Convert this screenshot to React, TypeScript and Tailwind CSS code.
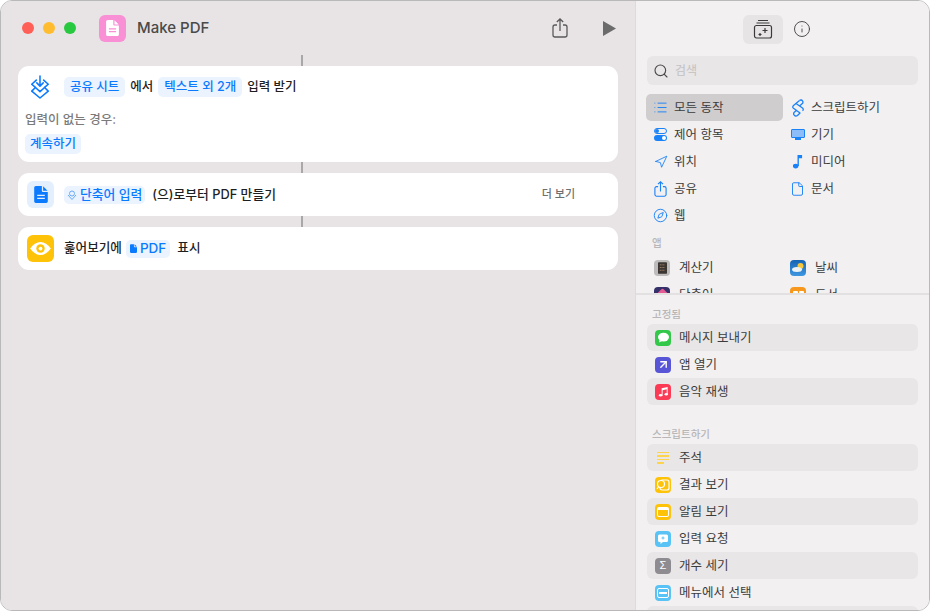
import { useState } from "react";
import { Search, Info, List, Navigation, File, Compass, ArrowUpRight } from "lucide-react";

const font = "font-['Inter','Noto_Sans_CJK_KR',sans-serif]";

function Token({ children, className = "" }: { children: React.ReactNode; className?: string }) {
    return <span className={`inline-flex items-center h-[20px] px-[6px] rounded-[5px] bg-[#eaf3fe] text-[#0a7aff] font-medium ${className}`}>{children}</span>;
}

function Connector() {
    return <div className="w-[2px] h-[11px] bg-[#a9a7a8] ml-[300px]" />;
}

function SmallDoc({ className = "", lines = "" }: { className?: string; lines?: string }) {
    return (
        <svg viewBox="0 0 16 20" className={className} fill="currentColor">
            <path d="M2 0h7v5.500c0 .8.700 1.500 1.500 1.500H16v11c0 1.100-.9 2-2 2H2c-1.100 0-2-.9-2-2V2C0 .9.900 0 2 0zM10.500 0.300L15.700 5.500h-5.200z" />
            {lines && <path d="M3.500 11h9M3.500 14.500h9" stroke={lines} strokeWidth="1.500" />}
        </svg>
    );
}

function ShareGlyph({ className = "", strokeWidth = 1.300 }: { className?: string; strokeWidth?: number }) {
    return (
        <svg viewBox="0 0 16 20" className={className} fill="none" stroke="currentColor" strokeWidth={strokeWidth}>
            <path d="M5 7H3a2 2 0 0 0-2 2v8a2 2 0 0 0 2 2h10a2 2 0 0 0 2-2V9a2 2 0 0 0-2-2h-2" />
            <path d="M8 13V1M4.800 4L8 1l3.200 3" />
        </svg>
    );
}

function Category({ icon, label, active = false }: { icon: React.ReactNode; label: string; active?: boolean }) {
    return (
        <div className={`h-[27px] flex items-center pl-[7px] rounded-[5px] ${active ? "bg-[#d0cdce]" : ""}`}>
            <span className="w-[15px] h-[18px] flex items-center justify-center text-[#1a82f7]">{icon}</span>
            <span className="ml-[6px] pt-[2px] text-[12.500px] text-[#3c3c3c]">{label}</span>
        </div>
    );
}

function Tile({ bg, children }: { bg: string; children: React.ReactNode }) {
    return <span className={`w-[16px] h-[16px] rounded-[4px] flex items-center justify-center shrink-0 overflow-hidden ${bg}`}>{children}</span>;
}

function ActionRow({ icon, label, striped }: { icon: React.ReactNode; label: string; striped: boolean }) {
    return (
        <div className={`h-[27px] shrink-0 flex items-center pl-[8px] rounded-[6px] ${striped ? "bg-[#e9e6e7]" : ""}`}>
            {icon}
            <span className="ml-[8px] pt-[1px] text-[12.500px] text-[#3c3c3c]">{label}</span>
        </div>
    );
}

function AppCell({ icon, label, indent = "pl-[8px]" }: { icon: React.ReactNode; label: string; indent?: string }) {
    return (
        <div className={`h-[27px] flex items-center ${indent}`}>
            {icon}
            <span className="ml-[9px] pt-[1px] text-[12.500px] text-[#3c3c3c]">{label}</span>
        </div>
    );
}

const pinned = [
    {
        label: "메시지 보내기",
        icon: (
            <Tile bg="bg-[#34c84a]">
                <svg viewBox="0 0 14 12" className="w-[13px] h-[11px]" fill="white">
                    <ellipse cx="7" cy="5.500" rx="6" ry="4.800" />
                    <path d="M3 8.500L2 11.500l4-2z" />
                </svg>
            </Tile>
        ),
    },
    { label: "앱 열기", icon: <Tile bg="bg-[#5856d6]"><ArrowUpRight size={13} stroke="white" strokeWidth={2.500} /></Tile> },
    {
        label: "음악 재생",
        icon: (
            <Tile bg="bg-[#fb3a55]">
                <svg viewBox="0 0 12 12" className="w-[11px] h-[11px]" fill="white">
                    <path d="M4 2.500L10.500 1v8h-1V3.500L5 4.500V10.500H4z" />
                    <ellipse cx="2.800" cy="10" rx="1.800" ry="1.400" />
                    <ellipse cx="9" cy="9" rx="1.800" ry="1.400" />
                </svg>
            </Tile>
        ),
    },
];

const scripting = [
    {
        label: "주석",
        icon: (
            <span className="w-[16px] flex flex-col gap-[2px] items-start pl-[2px]">
                <i className="block w-[12px] h-[1.500px] bg-[#fdd54a]" />
                <i className="block w-[12px] h-[1.500px] bg-[#fdd54a]" />
                <i className="block w-[12px] h-[1.500px] bg-[#fdd54a]" />
                <i className="block w-[7px] h-[1.500px] bg-[#fdd54a]" />
            </span>
        ),
    },
    {
        label: "결과 보기",
        icon: (
            <Tile bg="bg-[#fec309]">
                <svg viewBox="0 0 14 12" className="w-[14px] h-[12px]" fill="none" stroke="white" strokeWidth="1.200">
                    <rect x="4" y="1" width="9" height="10" rx="2" />
                    <circle cx="5" cy="5" r="3.500" fill="#fec309" />
                    <path d="M2.500 8L1 10" />
                </svg>
            </Tile>
        ),
    },
    { label: "알림 보기", icon: <Tile bg="bg-[#fec309]"><span className="block w-[12px] h-[10px] rounded-[2px] border-[1.500px] border-white border-t-[3px]" /></Tile> },
    {
        label: "입력 요청",
        icon: (
            <Tile bg="bg-[#5ac3f5]">
                <svg viewBox="0 0 12 12" className="w-[12px] h-[12px]">
                    <path d="M2.500 1.500h7a1.500 1.500 0 0 1 1.500 1.500v4.500a1.500 1.500 0 0 1-1.500 1.500H6L3.500 11V9h-1A1.500 1.500 0 0 1 1 7.500V3a1.500 1.500 0 0 1 1.500-1.500z" fill="white" />
                    <path d="M6 3.500v3M4.500 5h3" stroke="#5ac3f5" strokeWidth="1" />
                </svg>
            </Tile>
        ),
    },
    { label: "개수 세기", icon: <Tile bg="bg-[#8e8c91]"><span className="text-white text-[11px] leading-none font-['Liberation_Sans',sans-serif]">Σ</span></Tile> },
    {
        label: "메뉴에서 선택",
        icon: (
            <Tile bg="bg-[#5ac3f5]">
                <svg viewBox="0 0 12 10" className="w-[12px] h-[10px]">
                    <rect x="0.500" y="0.500" width="11" height="9" rx="1.500" fill="none" stroke="white" />
                    <rect x="2" y="4" width="8" height="2" fill="white" />
                </svg>
            </Tile>
        ),
    },
    { label: "", icon: <span className="w-[16px] h-[16px]" /> },
];

export default function App() {
    const [title] = useState("Make PDF");
    return (
        <div className={`w-[931px] h-[612px] bg-white overflow-hidden ${font}`}>
            <div className="w-[930px] h-[611px] flex rounded-[12px] border border-[#b9b9b9] overflow-hidden">
                <div className="w-[634px] bg-[#e8e4e5] flex flex-col shrink-0">
                    <div className="h-[54px] flex items-center pl-[21px] shrink-0">
                        <span className="w-[12px] h-[12px] rounded-full bg-[#ff5f57]" />
                        <span className="w-[12px] h-[12px] rounded-full bg-[#febc2e] ml-[9px]" />
                        <span className="w-[12px] h-[12px] rounded-full bg-[#28c840] ml-[9px]" />
                        <span className="w-[27px] h-[27px] rounded-[6px] bg-[#f98fd5] ml-[23px] flex items-center justify-center text-white">
                            <SmallDoc className="w-[13px] h-[16px]" lines="#f98fd5" />
                        </span>
                        <span className="ml-[11px] text-[15px] font-medium text-[#4a4a4a]">{title}</span>
                        <ShareGlyph className="w-[16px] h-[20px] ml-[343px] text-[#5a5a5a]" />
                        <svg viewBox="0 0 13 15" className="w-[13px] h-[15px] ml-[35px]" fill="#6b6b6b">
                            <path d="M0 0L13 7.500L0 15z" />
                        </svg>
                    </div>
                    <Connector />
                    <div className="mx-[17px] h-[96px] bg-white rounded-[11px] shrink-0 pt-[9px] pl-[7px]">
                        <div className="flex items-center h-[24px] text-[12.500px] text-[#1f1f1f] font-medium">
                            <svg viewBox="0 0 24 26" className="w-[22px] h-[24px] ml-[4px] text-[#0a7aff]" fill="none" stroke="currentColor" strokeWidth="1.700" strokeLinejoin="round" strokeLinecap="round">
                                <path d="M12 1v11M8.500 8.500L12 12l3.500-3.500" />
                                <path d="M8 5.500L3 10l4 3.500-4 4L12 25l9-7.500-4-4 4-3.500-5-4.500" />
                                <path d="M7 13.500L12 18l5-4.500" />
                            </svg>
                            <Token className="ml-[13px]">공유 시트</Token>
                            <span className="ml-[5px]">에서</span>
                            <Token className="ml-[5px]">텍스트 외 2개</Token>
                            <span className="ml-[5px]">입력 받기</span>
                        </div>
                        <div className="mt-[12px] text-[12.500px] leading-[18px] text-[#7b7b7b] font-medium">입력이 없는 경우:</div>
                        <Token className="mt-[5px] text-[12.500px] !px-[5px]">계속하기</Token>
                    </div>
                    <Connector />
                    <div className="mx-[17px] h-[43px] bg-white rounded-[11px] shrink-0 flex items-center pl-[9px] text-[12.800px] text-[#1f1f1f] font-medium">
                        <span className="w-[27px] h-[27px] rounded-[6px] bg-[#e3effd] flex items-center justify-center text-[#0a7aff]">
                            <SmallDoc className="w-[14px] h-[17px]" lines="#e3effd" />
                        </span>
                        <Token className="ml-[10px] !px-[3px] !h-[18px] gap-[3px]">
                            <svg viewBox="0 0 10 10" className="w-[10px] h-[10px]" fill="none" stroke="#6aaaf8" strokeWidth="1">
                                <circle cx="5" cy="3.500" r="2.500" />
                                <path d="M1 5L5 9.500L9 5" />
                            </svg>
                            단축어 입력
                        </Token>
                        <span className="ml-[7px]">(으)로부터 PDF 만들기</span>
                        <span className="ml-auto mr-[43px] text-[11px] text-[#6f6f6f]">더 보기</span>
                    </div>
                    <Connector />
                    <div className="mx-[17px] h-[43px] bg-white rounded-[11px] shrink-0 flex items-center pl-[9px] text-[12.600px] text-[#1f1f1f] font-medium">
                        <span className="w-[27px] h-[27px] rounded-[6px] bg-[#fec309] flex items-center justify-center">
                            <svg viewBox="0 0 24 16" className="w-[23px] h-[15px]">
                                <path d="M1 8c3-4.500 7-7 11-7s8 2.500 11 7c-3 4.500-7 7-11 7S4 12.500 1 8z" fill="white" />
                                <circle cx="12" cy="8" r="4.500" fill="#fec309" />
                                <circle cx="12" cy="8" r="2" fill="white" />
                            </svg>
                        </span>
                        <span className="ml-[10px]">훑어보기에</span>
                        <Token className="ml-[4px] !px-[4px] gap-[3px] !h-[18px] text-[13.500px]">
                            <SmallDoc className="w-[7px] h-[9px]" />
                            PDF
                        </Token>
                        <span className="ml-[7px]">표시</span>
                    </div>
                </div>
                <div className="flex-1 bg-[#f2f0f1] border-l border-[#dcdadb] flex flex-col min-w-0">
                    <div className="h-[294px] shrink-0 overflow-hidden border-b-2 border-[#e2e0e1]">
                        <div className="h-[55px] flex items-center justify-center pr-[12px] pt-[1px]">
                            <span className="w-[40px] h-[29px] rounded-[6px] bg-[#e6e4e5] flex items-center justify-center">
                                <svg viewBox="0 0 20 20" className="w-[20px] h-[20px] text-[#3a3a3a]" fill="none" stroke="currentColor" strokeWidth="1.200">
                                    <path d="M5 1.500h10M3.500 4h13" />
                                    <rect x="1.500" y="6.500" width="17" height="12.500" rx="2" />
                                    <path d="M12 9v5M9.500 11.500h5M7 14v3M5.500 15.500h3" />
                                </svg>
                            </span>
                            <Info size={18} strokeWidth={1.200} className="ml-[10px] text-[#3f3f3f]" />
                        </div>
                        <div className="mx-[11px] h-[29px] rounded-[6px] bg-[#e8e6e7] flex items-center pl-[6px]">
                            <Search size={16} strokeWidth={1.700} className="text-[#4a4a4a]" />
                            <span className="ml-[6px] text-[12px] text-[#c3c1c2]">검색</span>
                        </div>
                        <div className="grid grid-cols-[137px_137px] ml-[10px] mt-[9px]">
                            <Category active label="모든 동작" icon={<List size={15} strokeWidth={1.500} />} />
                            <Category
                                label="스크립트하기"
                                icon={
                                    <svg viewBox="0 0 14 18" className="w-[14px] h-[18px]" fill="none" stroke="currentColor" strokeWidth="1.300" strokeLinejoin="round">
                                        <path d="M8.500 1.500L2.500 6.500c-1 1-1 2 0 2.800L9 14l-2.500 2.500c-1 .8-2.500.6-3.300-.4-.8-1-.6-2.200.3-3L6 11" />
                                        <path d="M5 4.500L11.500 9c1 .8 1 2 0 2.800M8.500 1.500c1-.8 2.300-.6 3 .3.800 1 .6 2.200-.4 3L8.500 7" />
                                    </svg>
                                }
                            />
                            <Category
                                label="제어 항목"
                                icon={
                                    <span className="flex flex-col gap-[1px]">
                                        <span className="w-[13px] h-[6px] rounded-full border border-[#1a82f7] flex items-center"><i className="w-[4px] h-[4px] rounded-full bg-[#1a82f7]" /></span>
                                        <span className="w-[13px] h-[6px] rounded-full bg-[#1a82f7] flex items-center justify-end pr-[1px]"><i className="w-[4px] h-[4px] rounded-full bg-white" /></span>
                                    </span>
                                }
                            />
                            <Category
                                label="기기"
                                icon={
                                    <span className="flex flex-col items-center">
                                        <span className="w-[14px] h-[9px] rounded-[1px] bg-[#8dbdf8] border border-[#1a82f7]" />
                                        <span className="w-[6px] h-[2px] bg-[#1a82f7]" />
                                    </span>
                                }
                            />
                            <Category label="위치" icon={<Navigation size={14} strokeWidth={1.500} />} />
                            <Category
                                label="미디어"
                                icon={
                                    <svg viewBox="0 0 12 16" className="w-[11px] h-[15px]" fill="currentColor">
                                        <path d="M6 1l5 0v3.500H7.500V13H6z" />
                                        <ellipse cx="4" cy="13" rx="3" ry="2.500" />
                                    </svg>
                                }
                            />
                            <Category label="공유" icon={<ShareGlyph className="w-[13px] h-[16px]" strokeWidth={1.400} />} />
                            <Category label="문서" icon={<File size={16} strokeWidth={1.500} />} />
                            <Category label="웹" icon={<Compass size={15} strokeWidth={1.500} />} />
                        </div>
                        <div className="ml-[16px] mt-[8px] text-[10.500px] leading-[14px] font-medium text-[#b8b6b7]">앱</div>
                        <div className="grid grid-cols-[137px_137px] ml-[10px] mt-[3px]">
                            <AppCell
                                label="계산기"
                                icon={
                                    <Tile bg="bg-[#bdbbbc]">
                                        <svg viewBox="0 0 10 13" className="w-[9px] h-[12px]">
                                            <rect width="10" height="13" rx="1" fill="#3b3534" />
                                            <path d="M2 3h6M2 6h6M2 9h6" stroke="#c9a27a" strokeWidth="1" strokeDasharray="1 1" />
                                        </svg>
                                    </Tile>
                                }
                            />
                            <AppCell
                                label="날씨"
                                indent="pl-[7px]"
                                icon={
                                    <Tile bg="bg-gradient-to-b from-[#1664b4] to-[#3f97e0]">
                                        <svg viewBox="0 0 16 16" className="w-[16px] h-[16px]">
                                            <circle cx="10.500" cy="6" r="3" fill="#f7c83e" />
                                            <ellipse cx="7" cy="9.500" rx="5" ry="2.500" fill="#eef2f5" />
                                        </svg>
                                    </Tile>
                                }
                            />
                            <AppCell label="단축어" icon={<Tile bg="bg-[#34306a]"><span className="w-[9px] h-[9px] rotate-45 rounded-[2px] bg-[#e55a92]" /></Tile>} />
                            <AppCell
                                label="도서"
                                indent="pl-[7px]"
                                icon={
                                    <Tile bg="bg-[#f7981d]">
                                        <span className="flex gap-[1px]">
                                            <i className="block w-[5px] h-[8px] bg-white rounded-[1px]" />
                                            <i className="block w-[5px] h-[8px] bg-white rounded-[1px]" />
                                        </span>
                                    </Tile>
                                }
                            />
                        </div>
                    </div>
                    <div className="flex-1 overflow-hidden px-[11px] flex flex-col min-h-0">
                        <div className="mt-[12px] h-[16px] pl-[5px] text-[10.500px] leading-[16px] font-medium text-[#b8b6b7]">고정됨</div>
                        <div className="mt-[1px] flex flex-col">
                            {pinned.map((item, i) => (
                                <ActionRow key={i} icon={item.icon} label={item.label} striped={i % 2 === 0} />
                            ))}
                        </div>
                        <div className="mt-[22px] h-[16px] pl-[5px] text-[10.500px] leading-[16px] font-medium text-[#b8b6b7]">스크립트하기</div>
                        <div className="mt-[1px] flex flex-col">
                            {scripting.map((item, i) => (
                                <ActionRow key={i} icon={item.icon} label={item.label} striped={i % 2 === 0} />
                            ))}
                        </div>
                    </div>
                </div>
            </div>
        </div>
    );
}
